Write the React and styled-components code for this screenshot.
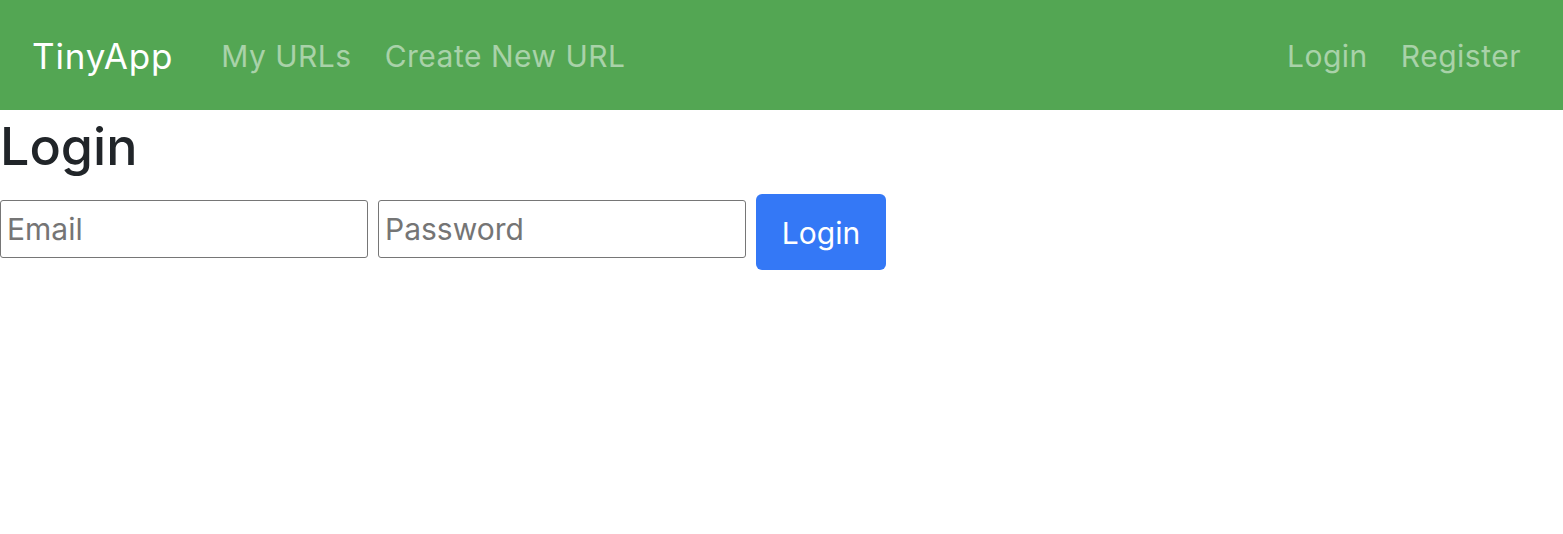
import React from "react";
import styled, { createGlobalStyle } from "styled-components";

const GlobalStyle = createGlobalStyle`
  body {
    margin: 0;
    background: #ffffff;
    font-family: Inter, "Noto Sans", sans-serif;
    color: #212529;
  }
`;

const Navbar = styled.nav`
  height: 110px;
  background: #53a653;
  display: flex;
  align-items: center;
  padding: 2px 42px 0 32px;
  box-sizing: border-box;
`;

const Brand = styled.a`
  color: #ffffff;
  font-size: 35px;
  letter-spacing: 0.8px;
  margin-right: 48px;
  text-decoration: none;
`;

const NavGroup = styled.div`
  display: flex;
  gap: 33px;
  margin-left: ${(p) => (p.right ? "auto" : "0")};
`;

const NavLink = styled.a`
  color: rgba(255, 255, 255, 0.5);
  font-size: 30px;
  letter-spacing: 0.5px;
  text-decoration: none;
`;

const Title = styled.h1`
  font-size: 52px;
  font-weight: 500;
  margin: 6px 0 16px;
  line-height: 1.2;
`;

const Form = styled.form`
  display: flex;
  align-items: flex-start;
  gap: 10px;
`;

const Input = styled.input`
  width: 368px;
  height: 58px;
  margin-top: 6px;
  box-sizing: border-box;
  border: 1px solid #767676;
  border-radius: 3px;
  padding: 0 6px;
  font-family: Inter, "Noto Sans", sans-serif;
  font-size: 30px;
  &::placeholder {
    color: #757575;
  }
`;

const Button = styled.button`
  width: 130px;
  height: 76px;
  padding-top: 2px;
  background: #3478f6;
  color: #ffffff;
  border: none;
  border-radius: 6px;
  font-family: Inter, "Noto Sans", sans-serif;
  font-size: 30px;
`;

export default function App() {
  return (
    <>
      <GlobalStyle />
      <Navbar>
        <Brand href="#">TinyApp</Brand>
        <NavGroup>
          <NavLink href="#">My URLs</NavLink>
          <NavLink href="#">Create New URL</NavLink>
        </NavGroup>
        <NavGroup right>
          <NavLink href="#">Login</NavLink>
          <NavLink href="#">Register</NavLink>
        </NavGroup>
      </Navbar>
      <Title>Login</Title>
      <Form onSubmit={(e) => e.preventDefault()}>
        <Input type="email" placeholder="Email" />
        <Input type="password" placeholder="Password" />
        <Button type="submit">Login</Button>
      </Form>
    </>
  );
}
